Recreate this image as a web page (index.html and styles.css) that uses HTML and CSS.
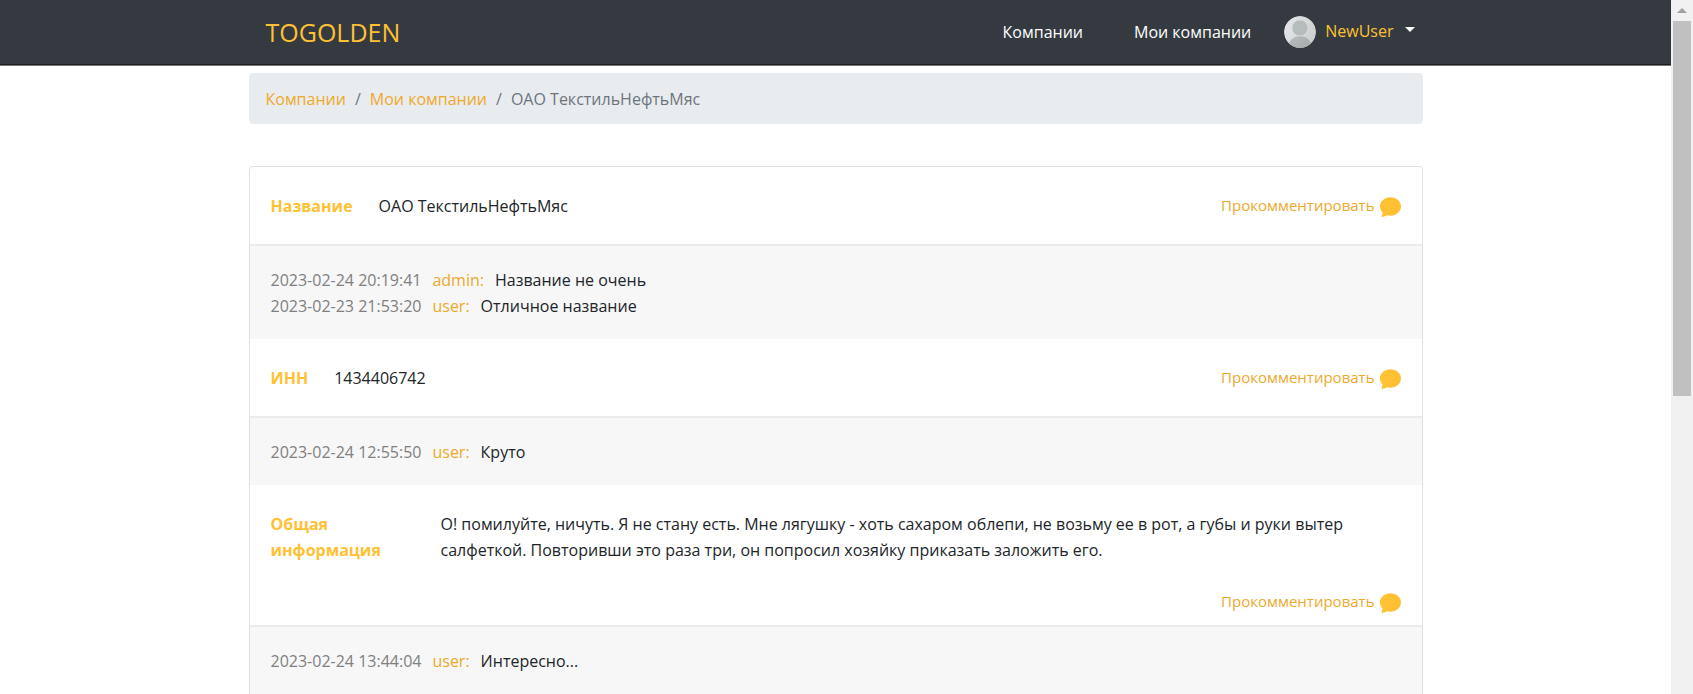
FILE: index.html
```html
<!DOCTYPE html>
<html lang="ru">
<head>
<meta charset="utf-8">
<meta name="viewport" content="width=device-width, initial-scale=1">
<title>ОАО ТекстильНефтьМяс</title>
<link rel="stylesheet" href="styles.css">
</head>
<body>
<svg class="symbols" aria-hidden="true">
  <symbol id="bubble" viewBox="0 0 16 16">
    <path fill="currentColor" d="M8 15c4.418 0 8-3.134 8-7s-3.582-7-8-7-8 3.134-8 7c0 1.760.743 3.370 1.970 4.600-.097 1.016-.417 2.130-.771 2.966-.079.186.074.394.273.362 2.256-.370 3.597-.938 4.180-1.234A9.060 9.060 0 0 0 8 15z"/>
  </symbol>
</svg>
<div class="page">
  <header class="topbar">
    <div class="container topbar-inner">
      <a class="brand" href="#">TOGOLDEN</a>
      <nav class="menu">
        <a class="menu-link" href="#">Компании</a>
        <a class="menu-link" href="#">Мои компании</a>
        <button class="user" type="button" aria-haspopup="true">
          <svg class="avatar" viewBox="0 0 32 32" aria-hidden="true">
            <defs>
              <linearGradient id="disc" x1="0" y1="0.3" x2="1" y2="0.7"><stop offset="0" stop-color="#e3e5e6"/><stop offset="1" stop-color="#cdcfcf"/></linearGradient>
              <linearGradient id="body" x1="0" y1="0" x2="1" y2="1"><stop offset="0" stop-color="#b9bdbe"/><stop offset="1" stop-color="#a3a6a6"/></linearGradient>
              <clipPath id="round"><circle cx="16" cy="16" r="16"/></clipPath>
            </defs>
            <g clip-path="url(#round)">
              <circle cx="16" cy="16" r="16" fill="url(#disc)"/>
              <ellipse cx="16" cy="29" rx="11" ry="9" fill="url(#body)"/>
              <circle cx="16" cy="12" r="8" fill="#b6bbbc" stroke="#d5d8d9" stroke-width="1"/>
            </g>
          </svg>
          <span class="user-name">NewUser</span>
          <span class="caret"></span>
        </button>
      </nav>
    </div>
  </header>

  <main class="container">
    <nav aria-label="breadcrumb">
      <ol class="crumbs">
        <li><a href="#">Компании</a></li>
        <li><a href="#">Мои компании</a></li>
        <li aria-current="page">ОАО ТекстильНефтьМяс</li>
      </ol>
    </nav>

    <article class="card">
      <section class="field">
        <strong class="label">Название</strong>
        <span class="value">ОАО ТекстильНефтьМяс</span>
        <a class="comment-link" href="#">Прокомментировать <svg class="bubble" aria-hidden="true"><use href="#bubble"/></svg></a>
      </section>
      <div class="comments">
        <p class="comment"><time>2023-02-24 20:19:41</time><a href="#">admin:</a><span>Название не очень</span></p>
        <p class="comment"><time>2023-02-23 21:53:20</time><a href="#">user:</a><span>Отличное название</span></p>
      </div>

      <section class="field">
        <strong class="label">ИНН</strong>
        <span class="value">1434406742</span>
        <a class="comment-link" href="#">Прокомментировать <svg class="bubble" aria-hidden="true"><use href="#bubble"/></svg></a>
      </section>
      <div class="comments">
        <p class="comment"><time>2023-02-24 12:55:50</time><a href="#">user:</a><span>Круто</span></p>
      </div>

      <section class="field field-long">
        <strong class="label">Общая информация</strong>
        <p class="value">О! помилуйте, ничуть. Я не стану есть. Мне лягушку - хоть сахаром облепи, не возьму ее в рот, а губы и руки вытер салфеткой. Повторивши это раза три, он попросил хозяйку приказать заложить его.</p>
        <a class="comment-link" href="#">Прокомментировать <svg class="bubble" aria-hidden="true"><use href="#bubble"/></svg></a>
      </section>
      <div class="comments">
        <p class="comment"><time>2023-02-24 13:44:04</time><a href="#">user:</a><span>Интересно...</span></p>
      </div>
    </article>
  </main>
</div>
<div class="scrollbar" aria-hidden="true">
  <span class="scroll-arrow"></span>
  <span class="scroll-thumb"></span>
</div>
</body>
</html>
```
FILE: styles.css
```css
* {
  box-sizing: border-box;
}

body {
  display: flex;
  height: 100vh;
  margin: 0;
  overflow: hidden;
  background: #fff;
  color: #212529;
  font: 16px/26px "Open Sans", "Noto Sans", sans-serif;
}

a {
  color: #eda92b;
  text-decoration: none;
}

p {
  margin: 0;
}

.symbols {
  position: absolute;
  width: 0;
  height: 0;
}

.page {
  flex: 1;
  min-width: 0;
  overflow: hidden;
}

.container {
  width: 100%;
  max-width: 1174px;
  margin: 0 auto;
}

.topbar {
  background: #343a40;
  border-bottom: 1px solid #1b1f23;
  box-shadow: 0 1px 0 #777;
}

.topbar-inner {
  display: flex;
  align-items: center;
  justify-content: space-between;
  min-height: 64px;
  padding: 0 8px 0 17px;
}

.brand {
  color: #ffc133;
  font-size: 25px;
  line-height: 40px;
}

.menu {
  display: flex;
  align-items: center;
}

.menu-link {
  margin-right: 51px;
  color: #fff;
}

.menu-link + .menu-link {
  margin-right: 33px;
}

.user {
  display: flex;
  align-items: center;
  padding: 0;
  border: 0;
  background: none;
  color: #ffc133;
  font: inherit;
}

.avatar {
  width: 32px;
  height: 32px;
  margin-right: 9px;
}

.user-name {
  padding-bottom: 3px;
}

.caret {
  margin: 0 0 5px 11px;
  border: 5px solid transparent;
  border-top-color: #fff;
  border-bottom: 0;
}

.crumbs {
  display: flex;
  margin: 8px 0 42px;
  padding: 13px 17px 12px;
  border-radius: 4px;
  background: #e9ecef;
  color: #6c757d;
  list-style: none;
}

.crumbs li + li::before {
  content: "/";
  padding: 0 9px;
}

.card {
  min-height: 100vh;
  border: 1px solid #dfdfdf;
  border-radius: 4px;
}

.field {
  display: flex;
  gap: 26px;
  padding: 26px 21px 25px;
}

.label {
  color: #ffc133;
}

.comment-link {
  display: flex;
  gap: 5px;
  height: 26px;
  margin-left: auto;
  font-size: 15px;
  line-height: 24px;
}

.bubble {
  width: 21px;
  height: 21px;
  margin-top: 3px;
  color: #ffc133;
}

.field-long {
  display: grid;
  grid-template-columns: 144px 1fr;
  padding-bottom: 10px;
}

.field-long .comment-link {
  grid-column: 1 / -1;
}

.comments {
  padding: 21px 21px 20px;
  border-top: 2px solid #ebebeb;
  background: #f7f7f7;
}

.comments:last-child {
  min-height: 100vh;
}

.comment {
  display: flex;
  gap: 11px;
}

.comment time {
  color: #808080;
}

.scrollbar {
  display: flex;
  flex: 0 0 22px;
  flex-direction: column;
  align-items: center;
  background: #f0f0f0;
}

.scroll-arrow {
  margin: 8px 0;
  border: 5px solid transparent;
  border-top: 0;
  border-bottom-color: #a0a0a0;
}

.scroll-thumb {
  width: 18px;
  height: 54%;
  background: #c0c0c0;
}
```
